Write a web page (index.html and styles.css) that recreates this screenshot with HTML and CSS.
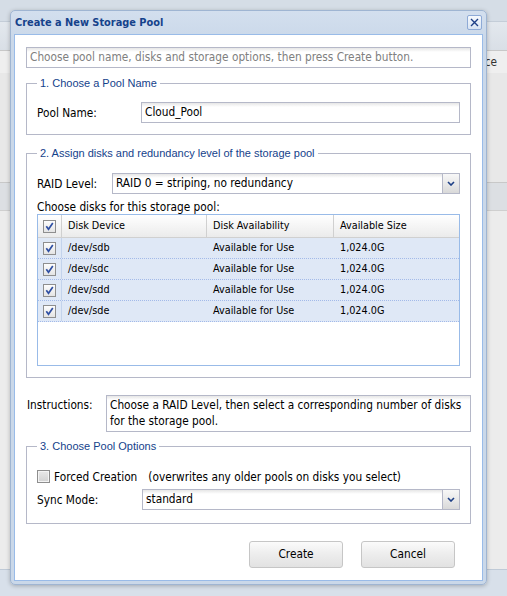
FILE: index.html
```html
<!DOCTYPE html>
<html>
<head>
<meta charset="utf-8">
<title>Create a New Storage Pool</title>
<link rel="stylesheet" href="styles.css">
</head>
<body>
<div class="desk">
  <div class="band b1"></div>
  <div class="band b2"></div>
  <div class="band b3"><span class="bg-text">Space</span></div>
  <div class="band b4"></div>
  <div class="band b5"></div>
  <div class="band b6"></div>
  <div class="band b7"></div>
</div>

<div class="win">
  <div class="win-head">
    <span class="win-title">Create a New Storage Pool</span>
    <span class="win-close"><svg width="9" height="9" viewBox="0 0 9 9"><path d="M1 1 L8 8 M8 1 L1 8" stroke="#1d3f86" stroke-width="1.4" fill="none"/></svg></span>
  </div>
  <div class="win-body">
    <div class="text-field hint">Choose pool name, disks and storage options, then press Create button.</div>

    <fieldset class="fs fs1">
      <legend>1. Choose a Pool Name</legend>
      <div class="form-row">
        <span class="lbl lbl-pool">Pool Name:</span>
        <div class="text-field grow">Cloud_Pool</div>
      </div>
    </fieldset>

    <fieldset class="fs fs2">
      <legend>2. Assign disks and redundancy level of the storage pool</legend>
      <div class="form-row">
        <span class="lbl lbl-raid">RAID Level:</span>
        <div class="combo grow">
          <span class="combo-text">RAID 0 = striping, no redundancy</span>
          <span class="trigger"><svg width="8" height="5" viewBox="0 0 8 5"><path d="M1 1 L4 4 L7 1" stroke="#1d3f86" stroke-width="1.6" fill="none"/></svg></span>
        </div>
      </div>
      <div class="sub-label">Choose disks for this storage pool:</div>
      <div class="grid">
        <div class="grid-row grid-head">
          <div class="cell c-check"><span class="cb"><svg width="11" height="11" viewBox="0 0 11 11"><path d="M2.3 5.2 L4.5 8.2 L8.8 2" stroke="#2f4fa3" stroke-width="1.7" fill="none"/></svg></span></div>
          <div class="cell c-dev">Disk Device</div>
          <div class="cell c-avail">Disk Availability</div>
          <div class="cell c-size">Available Size</div>
        </div>
        <div class="grid-row sel">
          <div class="cell c-check"><span class="cb"><svg width="11" height="11" viewBox="0 0 11 11"><path d="M2.3 5.2 L4.5 8.2 L8.8 2" stroke="#2f4fa3" stroke-width="1.7" fill="none"/></svg></span></div>
          <div class="cell c-dev">/dev/sdb</div>
          <div class="cell c-avail">Available for Use</div>
          <div class="cell c-size">1,024.0G</div>
        </div>
        <div class="grid-row sel">
          <div class="cell c-check"><span class="cb"><svg width="11" height="11" viewBox="0 0 11 11"><path d="M2.3 5.2 L4.5 8.2 L8.8 2" stroke="#2f4fa3" stroke-width="1.7" fill="none"/></svg></span></div>
          <div class="cell c-dev">/dev/sdc</div>
          <div class="cell c-avail">Available for Use</div>
          <div class="cell c-size">1,024.0G</div>
        </div>
        <div class="grid-row sel">
          <div class="cell c-check"><span class="cb"><svg width="11" height="11" viewBox="0 0 11 11"><path d="M2.3 5.2 L4.5 8.2 L8.8 2" stroke="#2f4fa3" stroke-width="1.7" fill="none"/></svg></span></div>
          <div class="cell c-dev">/dev/sdd</div>
          <div class="cell c-avail">Available for Use</div>
          <div class="cell c-size">1,024.0G</div>
        </div>
        <div class="grid-row sel">
          <div class="cell c-check"><span class="cb"><svg width="11" height="11" viewBox="0 0 11 11"><path d="M2.3 5.2 L4.5 8.2 L8.8 2" stroke="#2f4fa3" stroke-width="1.7" fill="none"/></svg></span></div>
          <div class="cell c-dev">/dev/sde</div>
          <div class="cell c-avail">Available for Use</div>
          <div class="cell c-size">1,024.0G</div>
        </div>
      </div>
    </fieldset>

    <div class="instr-row">
      <span class="lbl lbl-instr">Instructions:</span>
      <div class="textarea">Choose a RAID Level, then select a corresponding number of disks for the storage pool.</div>
    </div>

    <fieldset class="fs fs3">
      <legend>3. Choose Pool Options</legend>
      <div class="check-row">
        <span class="cb cb-off"></span>
        <span class="check-text">Forced Creation</span>
        <span class="check-note">(overwrites any older pools on disks you select)</span>
      </div>
      <div class="form-row sync-row">
        <span class="lbl lbl-sync">Sync Mode:</span>
        <div class="combo grow">
          <span class="combo-text">standard</span>
          <span class="trigger"><svg width="8" height="5" viewBox="0 0 8 5"><path d="M1 1 L4 4 L7 1" stroke="#1d3f86" stroke-width="1.6" fill="none"/></svg></span>
        </div>
      </div>
    </fieldset>

    <div class="buttons">
      <div class="btn">Create</div>
      <div class="btn">Cancel</div>
    </div>
  </div>
</div>
</body>
</html>
```

FILE: styles.css
```css
* { box-sizing: border-box; }
html, body { margin: 0; padding: 0; }
body {
  width: 507px;
  height: 596px;
  overflow: hidden;
  position: relative;
  background: #ececec;
  font-family: "DejaVu Sans Condensed", "Liberation Sans", sans-serif;
  font-size: 11.75px;
  color: #000;
}

/* background desktop */
.desk { display: flex; flex-direction: column; height: 596px; }
.band { flex: none; }
.b1 { height: 22px; background: #d5dde6; border-bottom: 1px solid #c4cdd8; }
.b2 { height: 29px; background: linear-gradient(#e3e8ee, #d9dfe6); border-bottom: 1px solid #c8c8c8; }
.b3 { height: 22px; background: #efefef; text-align: right; padding-right: 10px; line-height: 22px; color: #333; }
.b4 { height: 110px; background: #e8e8e8; border-bottom: 1px solid #c8c8c8; }
.b5 { height: 28px; background: #dcdfe3; border-bottom: 1px solid #cfcfcf; }
.b6 { height: 359px; background: #ececec; border-bottom: 1px solid #bfcad7; }
.b7 { flex: 1; background: #d8e0ea; }

/* window */
.win {
  position: absolute;
  left: 10px;
  top: 10px;
  width: 477px;
  border: 1px solid #9fb5d2;
  border-radius: 5px;
  background: linear-gradient(#d3dfee, #cad8e9 30px, #cad8e9);
  padding: 0 3px 3px;
  box-shadow: 0 1px 4px rgba(0, 0, 0, 0.25);
}
.win-head {
  height: 23px;
  display: flex;
  align-items: center;
  justify-content: space-between;
  padding: 0 1px 0 1px;
}
.win-title {
  font-weight: bold;
  font-size: 10.9px;
  color: #15428b;
}
.win-close {
  width: 15px;
  height: 15px;
  border: 1px solid #8eaad6;
  border-radius: 2px;
  background: linear-gradient(#f6f9fd, #d8e4f3);
  display: flex;
  align-items: center;
  justify-content: center;
}
.win-body {
  background: #fff;
  border: 1px solid #99bbe8;
  padding: 12px 11px 12px;
}

/* fields */
.text-field {
  height: 21px;
  border: 1px solid #b5b8c8;
  background: #fff linear-gradient(#e6e6e6, #fff 4px);
  padding: 0 3px;
  line-height: 19px;
  white-space: nowrap;
  overflow: hidden;
}
.hint { color: #808080; }
.grow { flex: 1; min-width: 0; }

.combo {
  height: 21px;
  border: 1px solid #b5b8c8;
  background: #fff linear-gradient(#e6e6e6, #fff 4px);
  display: flex;
}
.combo-text { flex: 1; padding: 0 3px; line-height: 19px; white-space: nowrap; overflow: hidden; }
.trigger {
  width: 17px;
  border-left: 1px solid #b5b8c8;
  background: linear-gradient(#f7f7f7, #e9e9e9 50%, #d9d9d9);
  display: flex;
  align-items: center;
  justify-content: center;
}

/* fieldsets */
.fs {
  margin: 0;
  min-width: 0;
  border: 1px solid #b5b8c8;
  padding: 0 10px;
}
.fs legend {
  padding: 0 3px;
  font-family: "Liberation Sans", Arial, sans-serif;
  font-size: 11px;
  line-height: 14px;
  color: #15428b;
}
.fs1 { margin-top: 8px; padding-top: 12px; padding-bottom: 11px; }
.fs2 { margin-top: 11px; padding-top: 13px; padding-bottom: 11px; }
.fs3 { margin-top: 7px; padding-top: 15px; padding-bottom: 13px; }

.form-row { display: flex; align-items: center; }
.lbl { flex: none; white-space: nowrap; }
.lbl-pool { width: 104px; }
.lbl-raid { width: 75px; }
.lbl-sync { width: 105px; }

.sub-label { margin-top: 6px; height: 14px; line-height: 14px; }

/* grid */
.grid {
  height: 152px;
  border: 1px solid #99bbe8;
  background: #fff;
  font-size: 10.75px;
}
.grid-row { display: flex; }
.grid-head {
  height: 23px;
  background: linear-gradient(#ffffff, #f5f5f5 50%, #ebebeb);
  border-bottom: 1px solid #d0d0d0;
}
.grid-head .cell { border-right: 1px solid #d0d0d0; line-height: 22px; }
.grid-head .c-size { border-right: none; }
.sel {
  height: 21px;
  background: #dfe8f6;
  border-bottom: 1px dotted #a3bae9;
}
.sel .cell { line-height: 20px; }
.sel .c-check { border-right: 1px solid #c3d3ec; }
.cell { flex: none; padding-left: 6px; white-space: nowrap; overflow: hidden; }
.c-check { width: 24px; padding-left: 0; display: flex; align-items: center; justify-content: center; }
.c-dev { width: 145px; }
.c-avail { width: 127px; }
.c-size { flex: 1; }

.cb {
  width: 13px;
  height: 13px;
  flex: none;
  border: 1px solid #8e8e8e;
  background: linear-gradient(#fdfdfd, #e4e4e4);
  display: flex;
  align-items: center;
  justify-content: center;
}
.cb-off { background: linear-gradient(#e9e9e9, #d2d2d2); box-shadow: inset 0 0 0 1px #f4f4f4; }

/* instructions */
.instr-row { display: flex; align-items: flex-start; margin-top: 17px; }
.lbl-instr { width: 80px; padding-top: 2px; line-height: 16px; padding-left: 1px; }
.textarea {
  flex: 1;
  border: 1px solid #b5b8c8;
  background: #fff linear-gradient(#e6e6e6, #fff 4px);
  padding: 1px 4px 2px 3px;
  line-height: 16px;
  height: 37px;
}

/* options */
.check-row { display: flex; align-items: center; height: 17px; }
.check-text { margin-left: 4px; }
.check-note { margin-left: 11px; }
.sync-row { margin-top: 4px; }

/* buttons */
.buttons { display: flex; justify-content: flex-end; gap: 18px; margin-top: 17px; padding-right: 16px; }
.btn {
  width: 94px;
  height: 27px;
  border: 1px solid #c6c6c6;
  border-radius: 3px;
  background: linear-gradient(#fbfbfb, #eeeeee 45%, #e2e2e2);
  text-align: center;
  line-height: 25px;
}
```
